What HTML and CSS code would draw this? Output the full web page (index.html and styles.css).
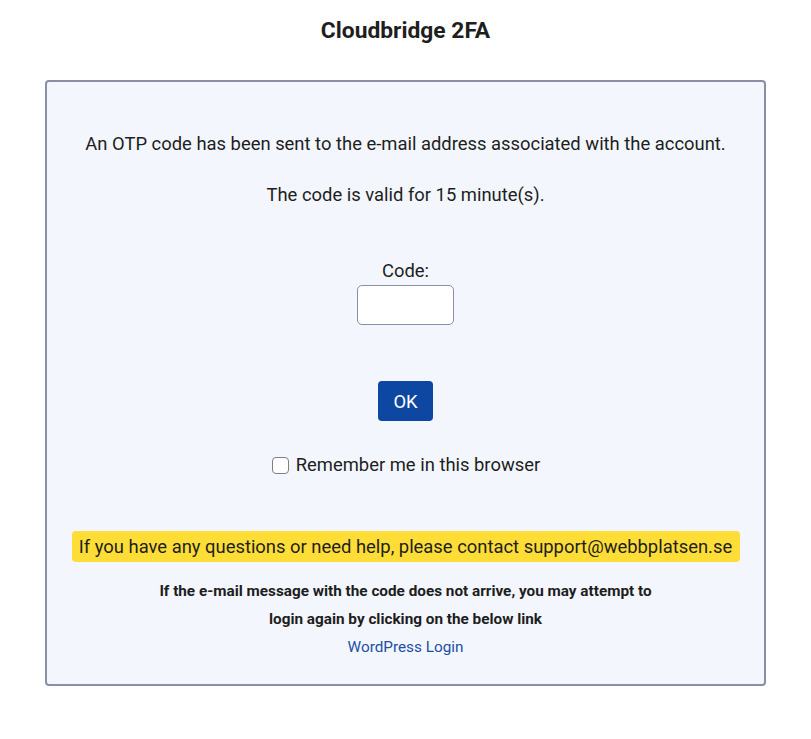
FILE: index.html
```html
<!DOCTYPE html>
<html lang="en">
<head>
<meta charset="utf-8">
<title>Cloudbridge 2FA</title>
<link rel="stylesheet" href="styles.css">
</head>
<body>
<h1 class="title">Cloudbridge 2FA</h1>
<form class="card">
  <p class="msg">An OTP code has been sent to the e-mail address associated with the account.</p>
  <p class="msg msg-valid">The code is valid for 15 minute(s).</p>
  <label class="code-label" for="code">Code:</label>
  <input class="code-input" id="code" type="text">
  <button class="ok-btn" type="button">OK</button>
  <label class="remember"><input type="checkbox" class="remember-box"><span>Remember me in this browser</span></label>
  <div class="help">If you have any questions or need help, please contact support@webbplatsen.se</div>
  <p class="note">If the e-mail message with the code does not arrive, you may attempt to<br>login again by clicking on the below link</p>
  <a class="login-link" href="#">WordPress Login</a>
</form>
</body>
</html>
```
FILE: styles.css
```css
html, body {
  margin: 0;
  padding: 0;
  background: #ffffff;
}
body {
  font-family: Roboto, "Liberation Sans", sans-serif;
  color: #1e1e1e;
}
.title {
  font-size: 22.8px;
  font-weight: 700;
  line-height: 24px;
  text-align: center;
  margin: 19px 0 37px;
  color: #1e1e1e;
}
.card {
  box-sizing: border-box;
  width: 721px;
  margin: 0 auto;
  border: 2px solid #8a8ea7;
  border-radius: 4px;
  background: #f3f6fd;
  padding: 50px 20px 23px;
  display: flex;
  flex-direction: column;
  align-items: center;
  text-align: center;
}
.msg {
  font-size: 18.4px;
  line-height: 24px;
  margin: 0;
}
.msg-valid {
  margin-top: 27px;
}
.code-label {
  font-size: 18.4px;
  line-height: 24px;
  margin-top: 52px;
}
.code-input {
  box-sizing: border-box;
  width: 97px;
  height: 40px;
  margin-top: 2px;
  border: 1px solid #8a8ea7;
  border-radius: 5px;
  background: #ffffff;
}
.ok-btn {
  margin-top: 56px;
  width: 55px;
  height: 40px;
  border: none;
  border-radius: 4px;
  background: #0d47a1;
  color: #ffffff;
  font-family: Roboto, "Liberation Sans", sans-serif;
  font-size: 18.4px;
  padding: 0;
}
.remember {
  display: flex;
  align-items: center;
  gap: 7px;
  margin-top: 32px;
  font-size: 18.4px;
  line-height: 24px;
}
.remember-box {
  appearance: none;
  box-sizing: border-box;
  width: 17px;
  height: 17px;
  margin: 0 0 0 1px;
  border: 1px solid #7d7f87;
  border-radius: 4px;
  background: #ffffff;
}
.help {
  margin-top: 54px;
  width: 668px;
  box-sizing: border-box;
  background: #fddd36;
  border-radius: 4px;
  font-size: 18.4px;
  line-height: 31px;
  color: #1e1e1e;
}
.note {
  font-size: 15.3px;
  font-weight: 700;
  line-height: 28px;
  margin: 15px 0 0;
}
.login-link {
  font-size: 15.3px;
  line-height: 28px;
  color: #1e4fa6;
  text-decoration: none;
}
```
